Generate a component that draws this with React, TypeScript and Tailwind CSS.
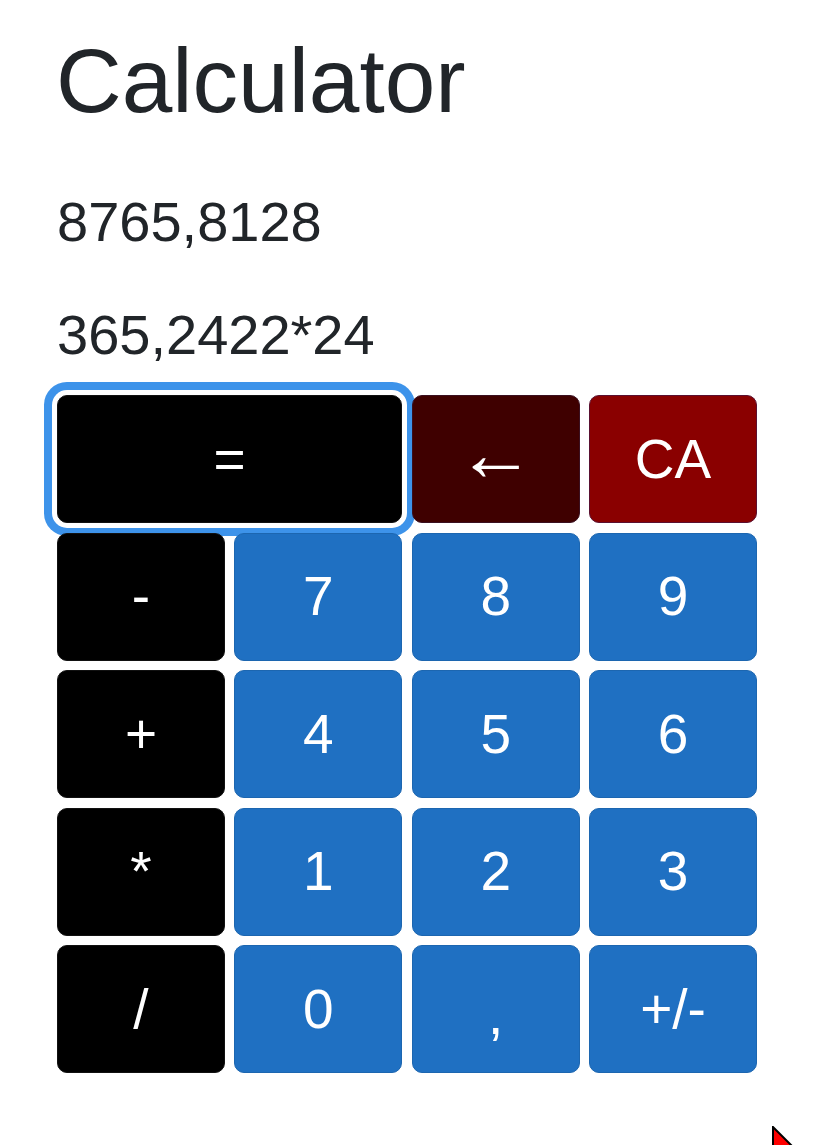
import React from "react";

type Btn = { label: string; kind: "op" | "num" | "back" | "ca" | "eq"; span?: boolean };

const rows: Btn[] = [
  { label: "=", kind: "eq", span: true },
  { label: "\u2190", kind: "back" },
  { label: "CA", kind: "ca" },
  { label: "-", kind: "op" },
  { label: "7", kind: "num" },
  { label: "8", kind: "num" },
  { label: "9", kind: "num" },
  { label: "+", kind: "op" },
  { label: "4", kind: "num" },
  { label: "5", kind: "num" },
  { label: "6", kind: "num" },
  { label: "*", kind: "op" },
  { label: "1", kind: "num" },
  { label: "2", kind: "num" },
  { label: "3", kind: "num" },
  { label: "/", kind: "op" },
  { label: "0", kind: "num" },
  { label: ",", kind: "num" },
  { label: "+/-", kind: "num" },
];

function cls(b: Btn) {
  const base =
    "flex items-center justify-center rounded-[10px] text-white text-[55px] leading-none border";
  switch (b.kind) {
    case "eq":
      return base + " col-span-2 bg-black border-[#111] shadow-[0_0_0_5px_#ffffff,0_0_0_13px_#3d93ea]";
    case "op":
      return base + " bg-black border-[#111]";
    case "back":
      return base + " bg-[#3f0000] border-[#3a1020]";
    case "ca":
      return base + " bg-[#8a0000] border-[#5a1030]";
    default:
      return base + " bg-[#1f70c2] border-[#1c66b0]";
  }
}

function labelCls(b: Btn) {
  if (b.label === ",") return "translate-y-[6px]";
  if (b.kind === "back") return "text-[78px] -translate-y-[6px]";
  return "";
}

export default function App() {
  return (
    <div
      className="relative w-[829px] h-[1145px] overflow-hidden bg-white pl-[57px] pt-[27px] text-[#212529]"
      style={{ fontFamily: '"Liberation Sans", Arial, sans-serif' }}
    >
      <h1 className="text-[91px] leading-[108px] font-normal mb-[45px] ml-[-1px]">Calculator</h1>
      <p className="text-[56px] leading-[84px] mb-[29px]">8765,8128</p>
      <p className="text-[56px] leading-[84px] mb-[18px]">365,2422*24</p>
      <div className="grid w-[700px] grid-cols-4 gap-x-[9.5px] gap-y-[9.5px] auto-rows-[128px]">
        {rows.map((b, i) => (
          <button key={i} className={cls(b)}>
            <span className={labelCls(b)}>{b.label}</span>
          </button>
        ))}
      </div>
      <svg
        className="absolute left-[772px] top-[1126px]"
        width="24"
        height="24"
        viewBox="0 0 24 24"
      >
        <polygon points="1,1 1,24 24,24" fill="#ff0000" stroke="#000" strokeWidth="2" />
      </svg>
    </div>
  );
}
